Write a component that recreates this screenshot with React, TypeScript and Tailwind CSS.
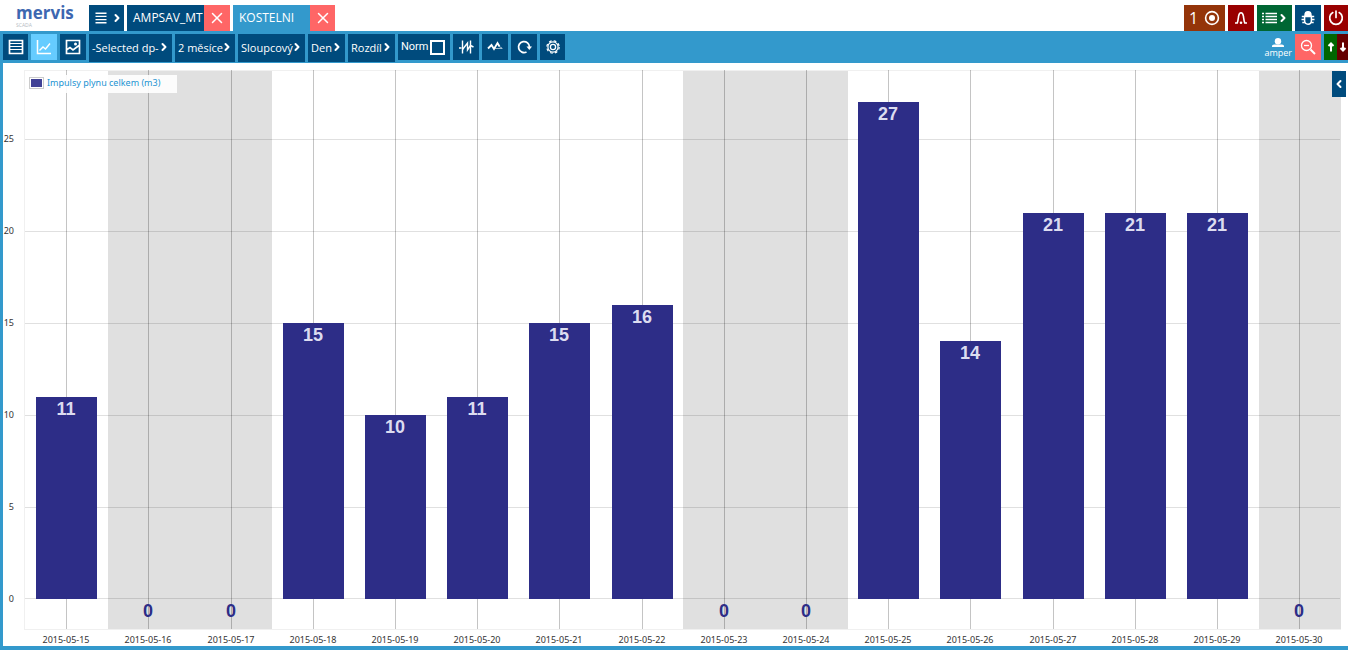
import { useState } from 'react';
import type { ReactNode } from 'react';
import { ChevronLeft, ChevronRight, X } from 'lucide-react';

interface Reading {
  date: string;
  value: number;
  weekend?: boolean;
}

const readings: Reading[] = [
  { date: '2015-05-15', value: 11 },
  { date: '2015-05-16', value: 0, weekend: true },
  { date: '2015-05-17', value: 0, weekend: true },
  { date: '2015-05-18', value: 15 },
  { date: '2015-05-19', value: 10 },
  { date: '2015-05-20', value: 11 },
  { date: '2015-05-21', value: 15 },
  { date: '2015-05-22', value: 16 },
  { date: '2015-05-23', value: 0, weekend: true },
  { date: '2015-05-24', value: 0, weekend: true },
  { date: '2015-05-25', value: 27 },
  { date: '2015-05-26', value: 14 },
  { date: '2015-05-27', value: 21 },
  { date: '2015-05-28', value: 21 },
  { date: '2015-05-29', value: 21 },
  { date: '2015-05-30', value: 0, weekend: true },
];

const ticks = [0, 5, 10, 15, 20, 25];

// Plot box in svg units
const LEFT = 22;
const RIGHT = 1337;
const TOP = 7;
const BOTTOM = 566;
const ZERO = 536;
const UNIT = 18.4;
const BAR = 61;
const STEP = 82.2;

function Chart() {
  const y = (value: number) => Math.round(ZERO - value * UNIT);

  return (
    <svg
      viewBox="0 0 1345 583"
      role="img"
      aria-label="Impulsy plynu celkem (m3)"
      className='block h-auto w-full font-["Noto_Sans",sans-serif]'
    >
      <rect
        x={LEFT - 0.5}
        y={TOP + 0.5}
        width={RIGHT - LEFT + 1}
        height={BOTTOM - TOP}
        fill="none"
        stroke="#f0f0f0"
      />

      {readings.map((r, i) =>
        r.weekend ? (
          <rect
            key={r.date}
            x={LEFT + i * STEP + 0.5}
            y={TOP + 1}
            width={STEP}
            height={BOTTOM - TOP - 1}
            fill="#e0e0e0"
            shapeRendering="crispEdges"
          />
        ) : null
      )}

      {/* Grid */}
      {ticks.map((t) => (
        <g key={t}>
          <line
            x1={LEFT}
            x2={RIGHT}
            y1={y(t) + (t === 0 ? -0.5 : 0.5)}
            y2={y(t) + (t === 0 ? -0.5 : 0.5)}
            stroke="#000"
            strokeOpacity="0.12"
          />
          <text
            x={11}
            y={y(t) + 3}
            textAnchor="end"
            className="fill-[#333] text-[9px]"
          >
            {t}
          </text>
        </g>
      ))}

      {readings.map((r, i) => {
        const center = Math.round(LEFT + (i + 0.5) * STEP);
        return (
          <g key={r.date}>
            <line
              x1={center + 0.5}
              x2={center + 0.5}
              y1={TOP}
              y2={BOTTOM}
              stroke="#000"
              strokeOpacity="0.23"
            />
            {r.value > 0 && (
              <rect
                x={center - 30}
                y={y(r.value)}
                width={BAR}
                height={ZERO - y(r.value)}
                fill="#2d2d87"
              />
            )}
            <text
              x={center}
              y={r.value > 0 ? y(r.value) + 18 : ZERO + 18}
              textAnchor="middle"
              className={
                r.value > 0
                  ? 'fill-[#dcdcf0] font-["Liberation_Sans",sans-serif] text-[18px] font-bold'
                  : 'fill-[#2d2d87] font-["Liberation_Sans",sans-serif] text-[18px] font-bold'
              }
            >
              {r.value}
            </text>
            <text
              x={center}
              y={580}
              textAnchor="middle"
              className="fill-[#333] text-[9px]"
            >
              {r.date}
            </text>
          </g>
        );
      })}

      {/* Legend */}
      <rect x="24" y="12" width="150" height="18" fill="#fff" fillOpacity="0.9" />
      <rect x="26.5" y="14.5" width="14" height="11" fill="#fff" stroke="#ccc" />
      <rect x="28" y="16" width="11" height="8" fill="#424296" />
      <text x="44" y="23" className="fill-[#1c94d2] text-[9px]">
        Impulsy plynu celkem (m3)
      </text>
    </svg>
  );
}

interface IconButtonProps {
  label: string;
  className: string;
  children: ReactNode;
}

function IconButton({ label, className, children }: IconButtonProps) {
  return (
    <button
      type="button"
      aria-label={label}
      className={`flex h-[26px] shrink-0 items-center justify-center text-white ${className}`}
    >
      {children}
    </button>
  );
}

interface PickerProps {
  label: string;
  options: string[];
  className: string;
}

function Picker({ label, options, className }: PickerProps) {
  return (
    <div className={`relative h-[26px] shrink-0 bg-[#004b7d] text-white ${className}`}>
      <select
        aria-label={label}
        className="h-full w-full appearance-none bg-[#004b7d] pb-[2px] pl-[3px] text-[11px]"
      >
        {options.map((option) => (
          <option key={option}>{option}</option>
        ))}
      </select>
      <ChevronRight
        className="pointer-events-none absolute top-[7px] right-[2px] h-3 w-3"
        strokeWidth={4}
      />
    </div>
  );
}

function Logo() {
  return (
    <div className="ml-4 w-[73px] shrink-0">
      <div className="text-[17px] leading-[18px] font-bold text-[#3d67b1]">mervis</div>
      <div className="text-[5px] leading-[7px] text-[#b4bac2]">SCADA</div>
    </div>
  );
}

export default function App() {
  const [norm, setNorm] = useState(false);

  return (
    <div className='border-b-4 border-[#3399cc] bg-white font-["Open_Sans","Noto_Sans",sans-serif]'>
      {/* Header */}
      <header className="flex h-[31px] items-end">
        <div className="pb-[2px]">
          <Logo />
        </div>
        <IconButton label="Menu" className="w-[35px] gap-1 bg-[#004b7d] pl-1">
          <svg viewBox="0 0 12 12" className="h-3 w-3" stroke="currentColor" strokeWidth="1.4">
            <path d="M0.5 1.2h11M0.5 4.4h11M0.5 7.6h11M0.5 10.8h11" />
          </svg>
          <ChevronRight className="h-3 w-3" strokeWidth={4} />
        </IconButton>
        <nav className="ml-[3px] flex gap-[3px] text-xs text-white">
          <div className="flex">
            <button
              type="button"
              className="h-[26px] w-[77px] bg-[#004b7d] pr-px pl-[6px] text-left whitespace-nowrap"
            >
              AMPSAV_MT
            </button>
            <IconButton label="Close AMPSAV_MT" className="w-[26px] bg-[#ff6666]">
              <X className="h-[18px] w-[18px]" />
            </IconButton>
          </div>
          <div className="flex">
            <button
              type="button"
              className="h-[26px] w-[77px] bg-[#3399cc] pr-px pl-[6px] text-left whitespace-nowrap"
            >
              KOSTELNI
            </button>
            <IconButton label="Close KOSTELNI" className="w-[25px] bg-[#ff6666]">
              <X className="h-[18px] w-[18px]" />
            </IconButton>
          </div>
        </nav>

        <div className="ml-auto flex gap-[3px]">
          <IconButton label="Active alarms" className="w-[41px] gap-[6px] bg-[#943409] text-base">
            <span>1</span>
            <svg viewBox="0 0 16 16" className="h-4 w-4" fill="none" stroke="currentColor">
              <circle cx="8" cy="8" r="6.4" strokeWidth="1.6" />
              <circle cx="8" cy="8" r="3" fill="currentColor" stroke="none" />
            </svg>
          </IconButton>
          <IconButton label="Alarms" className="w-[26px] bg-[#990000]">
            <svg viewBox="0 0 14 14" className="h-[14px] w-[14px]" fill="none" stroke="currentColor" strokeWidth="1.6">
              <path d="M1 12h2.2C4 10.5 4.2 8 4.6 5.2 5 3 5.8 1.8 7 1.8s2 1.2 2.4 3.400C9.800 8 10 10.500 10.800 12H13" />
              <circle cx="7" cy="11.8" r="1.3" fill="currentColor" stroke="none" />
            </svg>
          </IconButton>
          <IconButton label="List" className="w-[35px] bg-[#006633] pl-[2px]">
            <svg viewBox="0 0 15 12" className="h-3 w-[15px]" stroke="currentColor" strokeWidth="1.5">
              <path d="M0 1.5h2M3.5 1.5H15M0 4.5h2M3.5 4.5H15M0 7.5h2M3.5 7.5H15M0 10.5h2M3.5 10.5H15" />
            </svg>
            <ChevronRight className="h-3 w-3" strokeWidth={4} />
          </IconButton>
          <IconButton label="Debug" className="w-[26px] bg-[#004b7d]">
            <svg viewBox="0 0 14 14" className="h-[14px] w-[14px]" fill="none" stroke="currentColor" strokeWidth="1.5">
              <path d="M4 4.5C4 2 5 .8 7 .8s3 1.2 3 3.7z" fill="currentColor" />
              <path d="M3.6 5.5h6.8v4c0 2.500-1.400 3.700-3.400 3.700s-3.400-1.200-3.400-3.700z" />
              <path d="M3.500 5.500H.8M3.500 8.500H.5M3.800 11.500H1.300M10.500 5.500h2.700M10.500 8.500h3M10.200 11.500h2.500" />
            </svg>
          </IconButton>
          <IconButton label="Log out" className="w-6 bg-[#990000]">
            <svg viewBox="0 0 16 16" className="h-4 w-4" fill="none" stroke="currentColor" strokeWidth="1.7" strokeLinecap="round">
              <path d="M4.8 2.6a6.3 6.3 0 1 0 6.4 0M8 1v6.5" />
            </svg>
          </IconButton>
        </div>
      </header>

      {/* Toolbar */}
      <div className="flex h-8 items-center gap-[3px] bg-[#3399cc] pl-[3px]">
        <IconButton label="Table" className="w-[25px] bg-[#004b7d]">
          <svg viewBox="0 0 16 16" className="h-4 w-4" fill="none" stroke="currentColor">
            <path d="M1.5 1.5h13v13h-13z" strokeWidth="1.7" />
            <path d="M2 4.5h12M2 7.5h12M2 10.5h12" strokeWidth="1.2" />
          </svg>
        </IconButton>
        <IconButton label="Chart" className="w-[26px] bg-[#66ccff]">
          <svg viewBox="0 0 16 16" className="h-4 w-4" fill="none" stroke="currentColor" strokeWidth="1.5">
            <path d="M1.5 1v13.5H15" />
            <path d="M3.5 11.5l3.500-3.500 2.500 2L14 4.500" strokeWidth="1.4" />
          </svg>
        </IconButton>
        <IconButton label="Image" className="w-[26px] bg-[#004b7d]">
          <svg viewBox="0 0 16 16" className="h-4 w-4" fill="none" stroke="currentColor" strokeWidth="1.7">
            <path d="M1.5 1.5h13v13h-13zM2 10.5l3-2L8 11l6-4.500" />
            <circle cx="10.5" cy="5" r="1.5" fill="currentColor" stroke="none" />
          </svg>
        </IconButton>
        <Picker label="Data point" className="w-[83px]" options={['-Selected dp-']} />
        <Picker label="Range" className="w-[60px]" options={['2 měsíce']} />
        <Picker label="Chart type" className="w-[67px]" options={['Sloupcový']} />
        <Picker label="Interval" className="w-[37px]" options={['Den']} />
        <Picker label="Function" className="w-[47px]" options={['Rozdíl']} />
        <label className='flex h-[26px] w-[52px] shrink-0 items-center justify-between bg-[#004b7d] px-[3px] font-["Roboto",sans-serif] text-[11px] text-white'>
          Norm
          <input
            type="checkbox"
            checked={norm}
            onChange={(e) => setNorm(e.target.checked)}
            className="mr-[2px] h-[15px] w-[15px] appearance-none border-2 border-white checked:bg-white"
          />
        </label>
        <IconButton label="Limits" className="w-[26px] bg-[#004b7d]">
          <svg viewBox="0 0 16 16" className="h-4 w-4" fill="none" stroke="currentColor">
            <path d="M4.5 1.5v13M12.500 1.5v13" strokeWidth="1.4" />
            <path d="M1 9h2.500M4.500 10.500L9.500 4v7l3-4.500L15.500 8" strokeWidth="1.4" />
          </svg>
        </IconButton>
        <IconButton label="Smooth" className="w-[26px] bg-[#004b7d]">
          <svg viewBox="0 0 16 16" className="h-4 w-4" fill="none" stroke="currentColor">
            <path d="M1 9.5L4.5 6l2.500 4L10.500 4l2 3.500" strokeWidth="1.8" />
            <path d="M8 9.5h7.500M12 7.500l3 1.500" strokeWidth="1" strokeOpacity="0.6" />
          </svg>
        </IconButton>
        <IconButton label="Refresh" className="w-[26px] bg-[#004b7d]">
          <svg viewBox="0 0 16 16" className="h-4 w-4" fill="none" stroke="currentColor" strokeWidth="1.8">
            <path d="M10.5 13a5.5 5.5 0 1 1 3-5" />
            <path d="M10.5 7.5H16L13.3 11z" fill="currentColor" stroke="none" />
          </svg>
        </IconButton>
        <IconButton label="Settings" className="w-[25px] bg-[#004b7d]">
          <svg viewBox="0 0 16 16" className="h-4 w-4" fill="none" stroke="currentColor">
            <circle cx="8" cy="8" r="6.2" strokeWidth="1.2" strokeDasharray="2.7 2.17" />
            <circle cx="8" cy="8" r="5.1" strokeWidth="1.2" />
            <circle cx="8" cy="8" r="2.6" strokeWidth="1.3" />
          </svg>
        </IconButton>

        <div className="ml-auto flex items-center gap-[3px]">
          <button type="button" className="flex flex-col items-center text-[9px] leading-[11px] text-white">
            <svg viewBox="0 0 12 9" className="mt-[2px] h-[9px] w-3" fill="currentColor">
              <ellipse cx="6" cy="3.3" rx="3.2" ry="3.2" />
              <path d="M0 9V8c0-1.200 2-1.500 3.500-1.500h5C10 6.500 12 6.800 12 8v1z" />
            </svg>
            amper
          </button>
          <IconButton label="Zoom out" className="w-[26px] bg-[#ff6666]">
            <svg viewBox="0 0 16 16" className="h-4 w-4" fill="none" stroke="currentColor" strokeWidth="1.3">
              <circle cx="6.5" cy="6.5" r="5" />
              <path d="M4 6.5h5" />
              <path d="M10.5 10.5l4.5 4.5" strokeWidth="2" />
            </svg>
          </IconButton>
          <div className="flex">
            <IconButton label="Up" className="w-[13px] bg-[#006600]">
              <svg viewBox="0 0 8 10" className="h-[10px] w-2" fill="none" stroke="currentColor" strokeWidth="2">
                <path d="M4 9.5V1.5M1.5 4 4 1.5 6.5 4" />
              </svg>
            </IconButton>
            <IconButton label="Down" className="w-[11px] bg-[#660000]">
              <svg viewBox="0 0 8 10" className="h-[10px] w-2" fill="none" stroke="currentColor" strokeWidth="2">
                <path d="M4 .5v8M1.5 6 4 8.5 6.5 6" />
              </svg>
            </IconButton>
          </div>
        </div>
      </div>

      {/* Chart */}
      <main className="relative border-l-[3px] border-[#3399cc]">
        <Chart />
        <IconButton label="Show panel" className="absolute top-2 right-[2px] w-[14px] bg-[#004b7d]">
          <ChevronLeft className="h-3 w-3" strokeWidth={4} />
        </IconButton>
      </main>
    </div>
  );
}
